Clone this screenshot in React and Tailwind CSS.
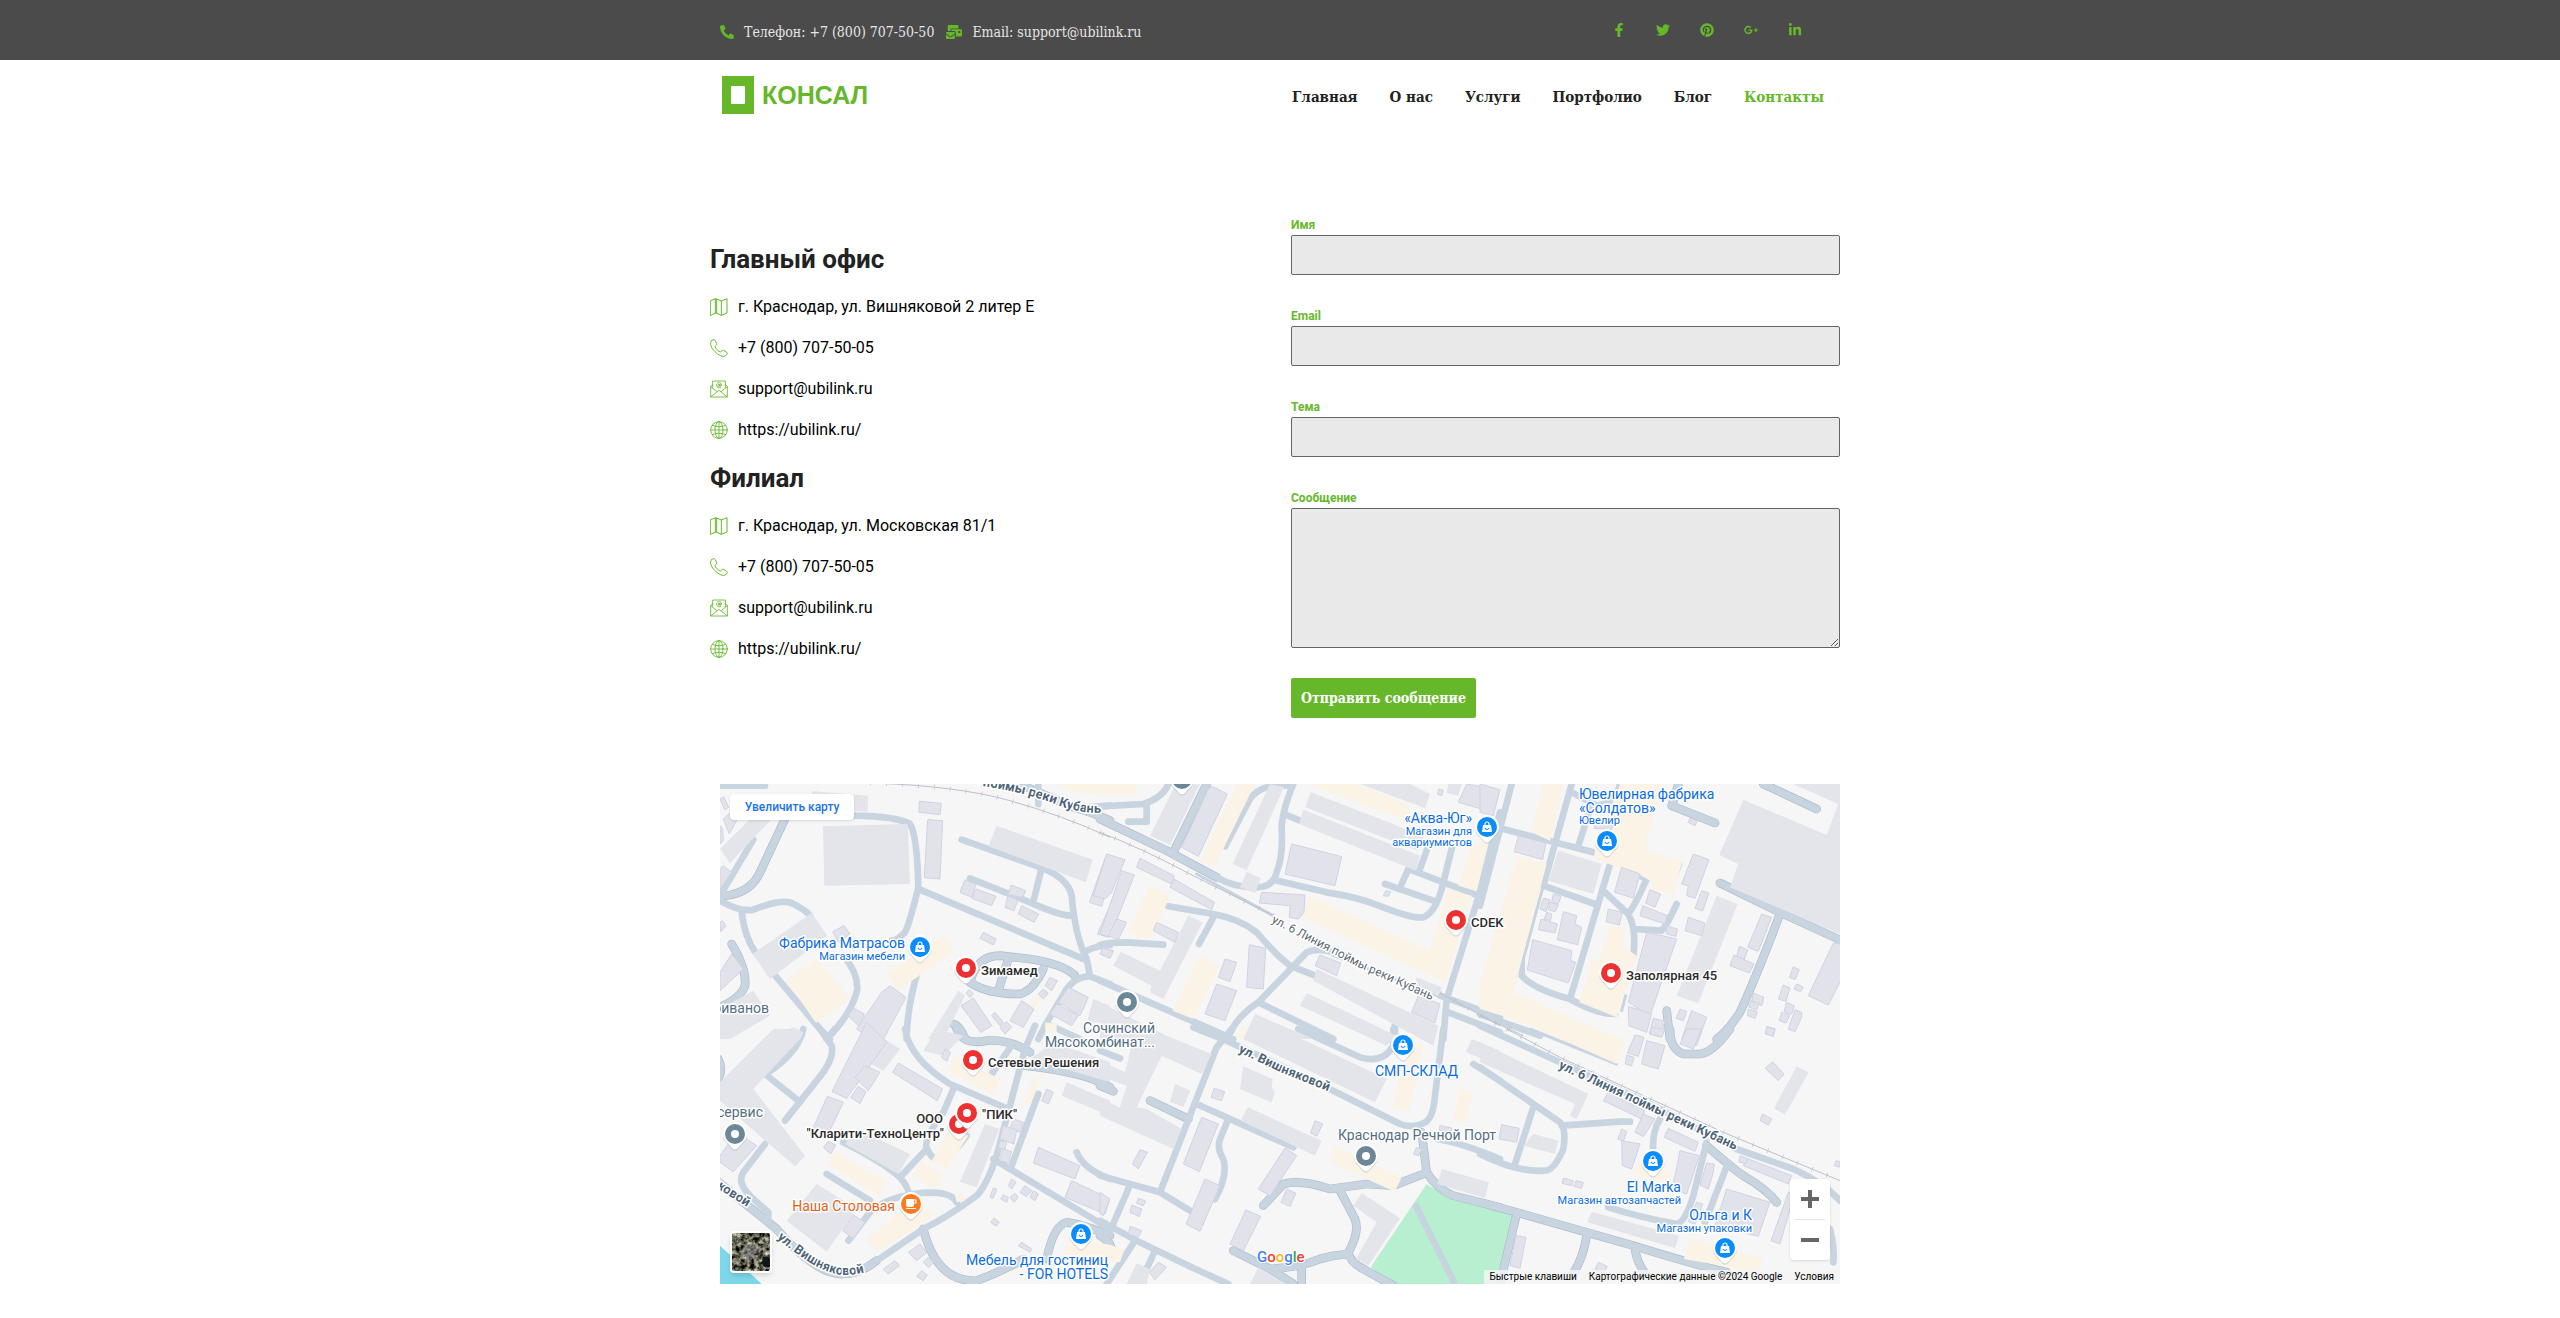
import { useState } from 'react';
import { FaPhoneAlt, FaMailBulk, FaFacebookF, FaTwitter, FaPinterest, FaGooglePlusG, FaLinkedinIn } from 'react-icons/fa';

const slab = "font-['Roboto_Slab','DejaVu_Serif_Condensed','DejaVu_Serif',serif]";

const socials = [
  { name: 'Facebook', Icon: FaFacebookF },
  { name: 'Twitter', Icon: FaTwitter },
  { name: 'Pinterest', Icon: FaPinterest },
  { name: 'Google+', Icon: FaGooglePlusG },
  { name: 'LinkedIn', Icon: FaLinkedinIn },
];

const menu = ['Главная', 'О нас', 'Услуги', 'Портфолио', 'Блог', 'Контакты'];

const offices = [
  { title: 'Главный офис', address: 'г. Краснодар, ул. Вишняковой 2 литер Е' },
  { title: 'Филиал', address: 'г. Краснодар, ул. Московская 81/1' },
];

/* ---------- Иконки контактов ---------- */

const lineIcon = {
  viewBox: '0 0 54 54',
  className: 'w-[18px] h-[18px] shrink-0 text-[#66b82a]',
  fill: 'none',
  stroke: 'currentColor',
  strokeWidth: 3,
  strokeLinejoin: 'round',
  strokeLinecap: 'round',
  'aria-hidden': true,
};

const MapIcon = () => (
  <svg {...lineIcon}>
    <path d="M2 8 L17 2 L34 9 L51 2 V45 L34 52 L17 45 L2 52 Z" />
    <path d="M16 3 V45 M20 4 V46 M34 9 V51" />
  </svg>
);

const PhoneIcon = () => (
  <svg {...lineIcon}>
    <path d="M5 5 C8 2 13 0 15 4 L20 13 C22 17 17 19 15 22 C16 29 25 37 31 39 C34 38 37 32 41 34 L50 40 C54 42 51 47 48 49 C44 53 37 53 32 50 C20 45 6 31 3 20 C1 14 1 9 5 5 Z" />
  </svg>
);

const MailIcon = () => (
  <svg {...lineIcon} strokeWidth={2.6}>
    <path d="M8 22 V3 H46 V22" />
    <path d="M8 14 L2 19 V51 H52 V19 L46 14" />
    <path d="M2 20 L20 34 M52 20 L34 34 M3 50 L27 31 L51 50" />
    <circle cx="27" cy="16" r="3" />
    <path d="M30 13 V18 C34 20 35 15 34 12 C31 6 22 7 20 13 C18 21 25 25 32 23" />
  </svg>
);

const GlobeIcon = () => (
  <svg {...lineIcon} strokeWidth={2.6}>
    <circle cx="27" cy="27" r="25" />
    <ellipse cx="27" cy="27" rx="12" ry="25" />
    <path d="M27 2 V52 M2 27 H52 M7 13 Q27 22 47 13 M7 41 Q27 32 47 41" />
  </svg>
);

/* ---------- Карта ---------- */

// Каждый квадрат: дороги (линии), outlined — дороги с обводкой,
// flat — крупные здания, small — здания с контуром, shops — торговые зоны
const tiles = [
  {
    id: 'nw', x: -30, y: -45,
    roads: 'M30 50 H165 M130 212 L30 380 M430 140 Q560 142 600 165 Q622 200 625 355 Q600 460 585 490 Q560 515 545 515 M30 395 Q90 430 130 422 Q210 390 245 402 Q290 425 300 440 M95 430 Q105 510 140 555 L200 625 L330 780 L360 810 M755 212 L1000 298 Q1075 330 1085 380 Q1095 500 1130 570 L1140 620 M780 328 L960 400 Q1050 440 1085 440 M993 305 L972 390 M630 362 L1125 572 M1130 545 Q1160 530 1200 528 M400 560 Q450 620 440 670 Q420 740 350 810 M625 600 Q590 720 590 810 M1200 645 L1140 622 Q1100 620 1070 660 L1005 770 L985 810 M1010 765 L1110 810 M985 45 V105 M1130 115 L1200 110',
    outlined: 'M225 150 L150 310 Q125 365 60 378 L30 382 M65 525 Q110 600 105 650 Q95 685 30 715 M780 640 Q800 560 870 560 L960 570 Q1060 585 1095 620 M780 640 Q830 675 930 675 Q970 665 1000 600 M895 570 L865 665 M730 765 Q750 770 765 810 M870 20 L1090 115 Q1150 130 1200 155',
    rail: 'M480 42 Q740 50 900 95 Q1060 140 1200 205',
    flat: ['339,172 593,165 600,345 343,350', '305,66 475,80 472,128 305,120', '30,240 130,140 185,150 60,282', '860,170 1148,272 1128,340 835,232', '128,555 305,432 352,500 180,630', '655,810 745,665 765,680 700,810', '30,720 130,665 180,740 60,810 30,810', '1150,690 1200,710 1200,760 1130,760', '170,810 250,775 280,790 270,810'],
    small: ['628,97 694,103 690,137 627,130', '653,152 698,155 690,330 643,326', '765,332 798,345 785,385 750,370', '798,360 858,382 845,410 785,388', '903,348 947,365 938,385 895,378', '893,382 924,392 912,426 885,415', '935,410 986,435 972,460 925,435', '1190,255 1215,265 1175,412 1138,400', '1200,410 1225,420 1195,505 1162,495', '1180,535 1210,545 1200,565 1172,555', '368,488 402,470 420,495 385,520', '30,610 65,555 100,600 30,665', '30,300 40,290 65,310 30,360', '30,90 42,84 56,115 44,122', '40,150 60,132 82,150 58,195', '30,170 38,180 40,215 30,225', '30,460 38,455 48,472 32,488', '810,508 820,490 858,510 850,528', '415,740 430,717 463,735 448,773', '515,670 540,650 588,685 510,830 440,780', '753,710 790,687 845,770 812,790', '900,755 935,695 972,720 940,775', '845,740 855,730 880,760 870,770', '870,775 890,758 905,775 885,795', '985,675 1000,660 1015,673 1000,690', '1005,650 1020,625 1042,635 1025,665', '1045,700 1075,655 1135,685 1110,740', '1020,735 1040,705 1105,740 1085,770', '768,672 778,662 790,674 780,686'],
    shops: ['528,615 700,500 732,548 562,665', '228,632 320,570 418,690 318,762', '958,705 990,680 1000,690 970,720', '1006,760 1040,765 1040,790 1006,790', '1035,45 1200,45 1200,78 1095,70'],
  },
  {
    id: 'n', x: 1140, y: -45,
    roads: 'M350 325 Q400 355 470 355 Q520 355 530 310 Q550 260 545 180 Q545 130 580 45 M0 112 L130 105 Q190 85 205 45 M140 110 V158 H85 M375 232 L450 90 Q480 45 560 50 M552 135 L600 155 M520 332 L680 370 Q780 385 850 415 Q940 450 970 445 Q1010 430 1030 340 L1060 220 M925 300 L1135 380 M855 345 L1000 395 M925 300 L903 350 M960 300 L985 230 M1200 130 L1135 385 L1040 690 L1030 810 M205 412 L340 435 Q420 450 470 490 Q530 560 570 590 L645 620 M340 445 L297 525 M190 527 L80 520 Q20 520 0 528 M700 550 Q650 535 620 550 L475 700 Q400 750 385 810 M475 700 L700 810 M0 635 L400 810 M885 755 V810 M1045 730 L1200 790 M1020 680 L1200 745',
    thin: 'M290 315 L520 440 M700 560 L1040 690',
    outlined: 'M0 150 L200 245 L350 325 M320 45 L220 250',
    rail: 'M0 190 Q130 240 270 315 L520 440 M1020 672 L1200 770',
    flat: ['150,200 225,50 300,45 210,228', '398,285 510,45 552,55 440,303', '420,355 440,308 482,328 465,372', '616,115 632,70 880,165 970,205 955,245', '597,165 610,122 960,260 948,305', '780,45 930,45 990,75 975,118', '1045,45 1085,45 1075,80 1040,72', '40,590 62,548 180,605 265,440 308,460 190,690 150,670 155,650', '640,635 650,600 1015,770 1000,830', '600,710 620,672 890,800 860,830', '430,810 465,735 640,810', '0,700 80,740 220,810 0,810', '950,625 1025,655 1018,680 945,660'],
    small: ['245,235 325,60 335,52 382,75 295,262', '575,225 725,263 705,350 555,315', '1100,45 1195,62 1180,130 1075,100', '485,370 615,378 612,430 595,450 568,445 570,410 478,402', '20,255 75,272 35,370 15,390 -20,380', '65,305 103,318 30,505 0,495', '120,268 222,320 215,345 110,295', '222,330 343,400 335,422 210,355', '170,460 235,490 225,520 160,485', '50,450 80,460 55,512 25,500', '8,535 40,548 30,568 0,555', '355,625 375,570 410,580 390,638', '315,735 350,645 410,665 375,755', '440,655 448,527 497,538 490,660', '645,590 660,558 722,582 710,620', '955,680 1020,705 1005,762 935,730', '850,380 858,365 872,368 865,382', '1012,75 1017,60 1030,64 1025,80'],
    shops: ['300,280 410,45 465,45 345,290', '0,45 107,45 107,78 0,75', '625,45 770,45 930,110 920,150 850,130', '630,382 990,545 1045,360 1115,380 1035,640 605,445', '1105,265 1120,220 1165,220 1130,367 1075,350', '150,348 212,378 150,513 85,490', '300,560 360,590 280,750 218,725', '1190,510 1200,510 1200,725 1135,715', '420,775 440,780 430,810 410,810'],
  },
  {
    id: 'ne', x: 2280, y: -45,
    roads: 'M95 45 L0 410 M70 180 L340 250 M275 45 L190 350 M295 230 L330 120 M275 70 L350 110 Q410 100 420 45 M190 350 L345 405 M390 285 L270 690 M375 370 L445 435 Q470 400 500 330 L480 320 M445 435 Q470 480 460 560 M465 480 L545 485 Q560 470 590 405 M125 560 V620 Q160 660 270 690 Q350 735 405 735 M0 735 L180 800',
    thin: 'M603 285 L590 320 M190 350 L122 600 M437 680 L425 725',
    outlined: 'M595 45 L575 110 L705 162 M850 45 L1010 120 M720 342 L900 430 L1085 515 M900 435 Q830 620 780 730 Q740 790 710 810 M560 725 L570 810',
    rail: 'M0 740 L130 800',
    flat: ['235,245 365,285 340,375 205,335', '790,92 1040,198 1075,105 940,45 1080,45 1080,495 750,355 775,285 718,258', '710,380 773,405 655,703 590,680'],
    small: ['0,45 60,62 40,140 0,130', '115,200 198,222 188,272 103,248', '425,295 480,315 460,387 403,370', '510,362 542,375 525,415 497,402', '488,410 562,440 555,465 480,440', '385,420 427,430 418,468 378,458', '640,255 687,272 645,388 620,380 625,350 605,345', '665,365 687,372 668,426 645,418', '625,445 675,462 665,500 615,485', '560,470 592,480 588,502 560,495', '845,435 875,445 835,547 803,535', '778,532 803,543 793,570 770,562', '762,558 822,585 808,612 750,590', '1060,522 1085,525 1085,630 1045,708 985,680', '940,593 958,602 945,632 928,625', '910,648 930,657 918,697 895,690', '950,645 970,655 962,668 942,660', '820,672 852,685 845,710 815,700', '813,695 838,703 830,722 806,714', '805,720 832,728 825,748 802,740', '920,700 943,710 935,735 912,728', '905,730 930,738 918,762 898,755', '945,722 965,730 965,745 945,788 925,780', '862,772 886,780 880,802 856,795', '190,388 210,392 198,428 180,420', '220,375 243,382 235,405 215,400', '210,400 235,408 225,428 205,422', '200,430 215,435 212,455 193,450', '183,450 232,465 225,492 175,482', '250,428 290,440 285,465 305,475 293,527 232,512', '158,512 275,545 272,575 287,580 265,642 142,603', '500,490 590,510 510,740 445,700', '445,712 515,735 500,790 447,770', '520,748 555,757 540,803 508,795', '600,720 620,728 610,755 588,748', '635,725 680,745 650,830 605,810', '630,148 652,155 645,170 624,160', '345,165 398,170 395,182 343,178'],
    shops: ['190,45 250,45 210,215 155,190', '110,262 200,285 100,670 435,815 410,885 130,760 0,720 0,640', '345,240 420,45 545,45 495,245 607,278 577,378 515,360 520,340 480,318 430,300 342,270', '390,465 438,485 425,530 470,560 410,745 298,700 335,570 360,570'],
  },
  {
    id: 'sw', x: -30, y: 735,
    roads: 'M280 0 Q265 70 175 130 M165 135 L265 215 M330 0 L365 50 Q375 90 320 155 L225 275 M375 0 L350 30 M585 0 Q600 90 720 165 L895 240 M730 180 L700 250 Q640 330 650 360 L570 445 M650 355 Q660 385 680 390 Q730 380 770 320 M975 -10 L945 60 Q905 210 860 380 Q830 470 800 500 Q720 560 640 600 L500 695 M985 195 L905 410 M850 390 L1200 600 M1100 370 Q1120 420 1200 450 M400 340 Q520 400 570 445 Q600 480 595 500 M350 435 L480 515 M415 635 L480 550 Q520 510 610 495 Q720 480 740 520 M165 345 L100 430 Q80 460 120 500 L175 550 V580 M905 50 Q870 100 845 135',
    outlined: 'M20 455 L200 600 Q320 740 400 735 Q450 735 500 695 M640 600 Q680 760 800 755 Q870 730 940 690 M1010 690 Q1030 590 1070 580 Q1120 585 1200 620 M740 0 Q760 50 830 35 Q900 30 960 70 M945 110 Q1130 130 1200 175 M25 90 Q40 120 25 150',
    flat: ['30,160 190,0 250,0 275,25 130,180 285,380 255,412 80,260 30,215', '520,28 570,60 520,125 475,100', '440,300 600,375 565,435 405,345', '230,575 320,465 440,540 350,668', '640,65 680,0 760,20 700,80', '750,458 825,285 868,300 800,475', '1070,160 1200,215 1200,260 1055,200', '1030,40 1200,100 1200,160 960,90'],
    small: ['366,188 470,-20 530,40 410,208', '435,145 465,110 510,130 475,185', '422,205 445,172 468,188 450,224', '310,295 352,202 400,220 350,325', '548,130 565,102 698,180 682,215', '340,355 355,337 377,348 362,375', '30,380 80,310 140,350 70,428 30,400', '398,605 430,558 465,580 430,628', '695,85 705,60 722,70 710,97', '910,270 940,280 930,310 900,300', '880,290 920,303 912,345 870,330', '870,335 890,340 885,360 865,355', '880,360 905,368 895,402 868,395', '995,215 1010,180 1030,190 1015,225', '985,355 1110,410 1095,450 970,402', '1085,455 1200,510 1185,555 1065,505', '895,470 905,450 918,460 905,480', '930,490 945,470 965,485 950,503', '960,505 970,485 985,495 975,515', '840,505 850,476 860,480 850,508', '872,510 880,497 895,505 890,520', '900,505 915,493 925,505 912,520', '842,580 852,567 868,580 858,592', '595,670 630,645 650,670 620,695', '640,700 655,685 672,700 655,715', '520,720 555,695 568,710 535,735', '620,742 635,725 652,738 640,755', '925,650 935,640 965,660 960,670'],
    shops: ['355,405 375,368 528,458 505,500', '470,630 620,510 670,560 500,668', '605,440 630,398 697,435 675,480', '665,395 720,300 775,320 710,420', '735,500 760,490 765,515 740,520', '712,125 735,80 870,150 850,198', '943,218 970,145 990,152 960,230', '1060,675 1080,620 1210,650 1242,665 1230,700'],
  },
  {
    id: 's', x: 1140, y: 735,
    roads: 'M280 -5 L380 35 L700 185 L900 285 Q940 300 975 280 Q1000 265 1005 200 L1030 0 M395 0 L350 55 L180 490 M290 225 L580 355 M0 440 L180 490 L270 545 M85 480 L20 630 M0 575 L110 635 L275 715 L385 765 M105 635 L20 765 M165 665 L140 720 M385 270 L360 330 Q350 360 370 390 Q385 440 345 510 M595 0 L780 85 Q850 105 880 50 V0 M1010 330 Q1080 340 1200 390 M1120 105 L1200 155 M0 65 L60 88',
    outlined: 'M150 215 L265 270 M490 530 L550 465 Q600 450 690 480 L800 465 L880 470 L970 435 M965 310 L980 430 Q1010 480 1060 500 L1200 535 M720 485 L765 570 Q780 610 745 670 Q750 700 790 720 L880 770 M400 665 L510 720 L580 765 M510 720 Q600 715 660 690 Q700 678 745 675 M605 710 V765 M0 170 L40 187 M0 620 Q40 640 35 680',
    flat: ['100,30 150,0 335,75 305,135 185,80 110,235 140,240 245,300 220,360 0,260 0,210 60,235 80,170 0,140 0,95 75,130', '430,30 450,-10 520,-10 860,150 825,220', '430,112 518,150 515,175 525,190 515,220 420,180', '225,165 272,185 250,235 210,218', '422,275 443,235 665,335 645,380', '785,492 900,568 805,710 768,690 830,580 760,530', '1025,420 1167,460 1155,507 1012,465', '80,765 110,703 150,720 140,765', '450,765 475,715 560,765', '1115,30 1200,65 1200,110 1098,70'],
    small: ['333,205 343,178 374,188 365,215', '305,265 355,285 298,428 250,405', '315,450 360,470 300,607 258,585', '97,405 120,362 142,370 115,420', '645,275 668,285 650,322 632,312', '555,357 590,380 510,500 475,480', '560,480 588,493 570,532 543,520', '438,543 482,562 430,665 390,645', '115,508 137,516 130,530 110,523', '95,528 125,540 118,563 90,550', '90,592 125,605 115,625 85,615', '148,730 175,700 200,715 165,752', '0,490 30,510 10,560 0,555', '940,375 950,355 965,362 955,380', '1020,290 1055,297 1052,310 1018,303'],
    shops: ['705,355 905,445 885,488 690,400', '930,40 972,45 925,248 875,235', '1080,180 1120,190 1100,280 1058,270', '425,-10 440,0 430,25 415,20'],
  },
  {
    id: 'se', x: 2280, y: 735,
    roads: 'M0 -10 L240 100 L540 240 L770 360 L940 420 Q1030 460 1080 515 M0 115 L240 280 Q260 300 250 360 Q220 430 190 425 Q110 430 0 375 M245 290 L420 278 H450 M160 235 L105 405 M540 270 Q515 310 520 370 M680 340 L640 500 Q615 580 590 585 Q480 565 385 535 M745 400 L675 580 M1050 600 Q1065 660 1060 700',
    thin: 'M150 0 L410 105',
    outlined: 'M570 0 Q570 60 610 75 H660 Q700 70 750 0 M680 350 Q760 420 790 440 Q860 480 890 520 M0 520 L110 550 L320 610 L460 650 Q620 700 740 730 M320 620 Q310 690 275 740 M465 660 Q470 700 500 740 M110 555 L60 765',
    rail: 'M80 0 L240 85 L730 310 L1080 455',
    flat: ['0,40 325,195 290,270 270,260 285,225 0,100', '950,112 986,130 915,257 882,238', '160,315 235,335 225,375 130,350', '335,548 597,620 585,657 322,580', '0,455 25,462 15,505 0,500'],
    small: ['465,18 492,25 475,82 442,72', '440,78 462,85 455,110 436,105', '500,35 555,50 535,120 485,105', '515,-5 555,0 545,25 510,15', '620,0 665,0 640,60 600,45', '860,-5 885,0 878,22 856,12', '878,98 912,135 895,155 856,118', '848,255 875,270 865,288 840,275', '385,190 495,245 485,270 370,215', '490,255 525,270 490,323 465,310', '565,298 655,340 645,367 553,325', '65,287 118,298 110,340 57,330', '425,300 440,308 430,337 413,330', '425,335 480,345 455,420 427,410', '600,365 658,380 620,495 575,480 585,440', '680,402 703,405 700,430 685,480 660,468', '740,480 870,520 835,622 705,590', '800,388 935,440 925,465 790,410', '780,380 803,388 798,403 777,400', '945,490 900,645 873,635 925,490', '108,620 138,625 120,718 90,710', '355,700 382,712 370,735 345,722', '250,447 280,455 276,470 246,463', '288,455 310,460 305,478 282,472', '1068,395 1080,398 1080,415 1063,410', '650,520 668,525 645,585 625,578'],
    shops: ['470,400 575,430 560,465 460,430', '630,628 850,690 835,730 612,690'],
  },
];

const pins = [
  { x: 462, y: -5, kind: 'place' },
  { x: 200, y: 163, kind: 'shop' },
  { x: 246, y: 184, kind: 'mark' },
  { x: 767, y: 43, kind: 'shop' },
  { x: 736, y: 136, kind: 'mark' },
  { x: 407, y: 218, kind: 'place' },
  { x: 683, y: 261, kind: 'shop' },
  { x: 887, y: 57, kind: 'shop' },
  { x: 891, y: 189, kind: 'mark' },
  { x: 253, y: 276, kind: 'mark' },
  { x: 239, y: 340, kind: 'mark' },
  { x: 247, y: 329, kind: 'mark' },
  { x: 15, y: 350, kind: 'place' },
  { x: 191, y: 420, kind: 'food' },
  { x: 361, y: 450, kind: 'shop' },
  { x: 646, y: 372, kind: 'place' },
  { x: 933, y: 377, kind: 'shop' },
  { x: 1005, y: 464, kind: 'shop' },
];

const pinColors = { shop: '#0a8cff', mark: '#ee3030', place: '#6c8795', food: '#ff7a1f' };

const labels = [
  { t: 'Фабрика Матрасов', x: 185, y: 164, c: 'shop', end: true },
  { t: 'Магазин мебели', x: 185, y: 176, c: 'sub', end: true },
  { t: 'Зимамед', x: 261, y: 191, c: 'mark' },
  { t: '«Аква-Юг»', x: 752, y: 39, c: 'shop', end: true },
  { t: 'Магазин для', x: 752, y: 51, c: 'sub', end: true },
  { t: 'аквариумистов', x: 752, y: 62, c: 'sub', end: true },
  { t: 'CDEK', x: 751, y: 143, c: 'mark' },
  { t: 'Ювелирная фабрика', x: 859, y: 15, c: 'shop' },
  { t: '«Солдатов»', x: 859, y: 29, c: 'shop' },
  { t: 'Ювелир', x: 859, y: 40, c: 'sub' },
  { t: 'Заполярная 45', x: 906, y: 196, c: 'mark' },
  { t: 'Эриванов', x: 49, y: 229, c: 'place', end: true },
  { t: 'Сетевые Решения', x: 268, y: 283, c: 'mark' },
  { t: 'ООО', x: 223, y: 339, c: 'mark', end: true },
  { t: '"Кларити-ТехноЦентр"', x: 224, y: 354, c: 'mark', end: true },
  { t: '"ПИК"', x: 262, y: 335, c: 'mark' },
  { t: 'сервис', x: 43, y: 333, c: 'place', end: true },
  { t: 'Наша Столовая', x: 175, y: 427, c: 'food', end: true },
  { t: 'Мебель для гостиниц', x: 388, y: 481, c: 'shop', end: true },
  { t: '- FOR HOTELS', x: 388, y: 495, c: 'shop', end: true },
  { t: 'Сочинский', x: 435, y: 249, c: 'place', end: true },
  { t: 'Мясокомбинат...', x: 435, y: 263, c: 'place', end: true },
  { t: 'СМП-СКЛАД', x: 655, y: 292, c: 'shop' },
  { t: 'Краснодар Речной Порт', x: 618, y: 356, c: 'place' },
  { t: 'El Marka', x: 961, y: 408, c: 'shop', end: true },
  { t: 'Магазин автозапчастей', x: 961, y: 420, c: 'sub', end: true },
  { t: 'Ольга и К', x: 1032, y: 436, c: 'shop', end: true },
  { t: 'Магазин упаковки', x: 1032, y: 448, c: 'sub', end: true },
];

const labelStyles = {
  shop: 'text-[14px] fill-[#0b6be3]',
  sub: 'text-[11px] fill-[#0b6be3]',
  mark: 'text-[13px] font-medium fill-[#2b2b2b]',
  place: 'text-[14px] fill-[#546e7f]',
  food: 'text-[14px] fill-[#e2621b]',
};

const streets = [
  { id: 'st1', d: 'M190 -40 L262 2 Q305 8 340 22 Q360 29 381 29', t: 'ул. 6 Линия поймы реки Кубань', end: true, bold: true },
  { id: 'st2', d: 'M551 138 L640 184 L720 220', t: 'ул. 6 Линия поймы реки Кубань' },
  { id: 'st3', d: 'M838 284 L920 322 L1030 373', t: 'ул. 6 Линия поймы реки Кубань', bold: true },
  { id: 'st4', d: 'M518 268 L560 288 L630 316', t: 'ул. Вишняковой', bold: true },
  { id: 'st5', d: 'M57 454 Q100 491 125 491 Q140 491 160 484', t: 'ул. Вишняковой', bold: true },
  { id: 'st6', d: 'M-60 360 L0 406 L27 423', t: 'ул. Вишняковой', end: true, bold: true },
];

const Pin = ({ x, y, kind }) => (
  <g transform={`translate(${x} ${y})`}>
    <path d="M-12 0 A12 12 0 1 1 12 0 C12 6 8 8 3 14 Q0 17 -3 14 C-8 8 -12 6 -12 0 Z" fill="#9aa3ad" opacity="0.5" transform="translate(0 1)" />
    <path d="M-12 0 A12 12 0 1 1 12 0 C12 6 8 8 3 14 Q0 17 -3 14 C-8 8 -12 6 -12 0 Z" fill="#fff" />
    <circle r="10" fill={pinColors[kind]} />
    {kind === 'shop' && (
      <>
        <path d="M-4 -2 H4 L5 5 H-5 Z" fill="#fff" />
        <path d="M-2 -1 V-3 A2 2 0 0 1 2 -3 V-1" fill="none" stroke="#fff" strokeWidth="1.2" />
        <path d="M-2 1 Q0 4 2 1" fill="none" stroke="#0a8cff" strokeWidth="1.2" />
      </>
    )}
    {kind === 'food' && (
      <>
        <path d="M-5 -5 H3 V1 Q3 3 1 3 H-3 Q-5 3 -5 1 Z M-5 4 H5 V5 H-5 Z" fill="#fff" />
        <path d="M3 -4 H5 V-1 H3" fill="none" stroke="#fff" strokeWidth="1.2" />
      </>
    )}
    {(kind === 'mark' || kind === 'place') && <circle r="4" fill="#fff" />}
  </g>
);

const MapDrawing = () => (
  <svg
    viewBox="0 0 1120 500"
    preserveAspectRatio="xMidYMid slice"
    className="w-full h-full bg-[#f6f6f6]"
    role="img"
    aria-label="Карта"
  >
    <g transform="scale(0.33333)" strokeLinejoin="round">
      <g fill="#b8efd1">
        <path d="M2120 1200 Q2170 1240 2340 1275 L2385 1285 L2325 1500 H2020 L1952 1450 Z" />
      </g>
      <path d="M0 1385 L125 1500 H0 Z" fill="#7dd7ea" />
      {tiles.map((tile) => (
        <g key={tile.id} transform={`translate(${tile.x} ${tile.y})`} fill="none" strokeLinecap="round">
          <path d={tile.outlined} stroke="#adbccb" strokeWidth="26" />
        </g>
      ))}
      {tiles.map((tile) => (
        <g key={tile.id} transform={`translate(${tile.x} ${tile.y})`} fill="none" stroke="#c8d5e1" strokeLinecap="round">
          <path d={tile.outlined} strokeWidth="22" />
          <path d={tile.roads} strokeWidth="20" />
          {tile.thin && <path d={tile.thin} strokeWidth="9" />}
        </g>
      ))}
      <path d="M2085 1260 L2205 1500" stroke="#c6d4df" strokeWidth="20" fill="none" />
      {tiles.map((tile) => (
        <g key={tile.id} transform={`translate(${tile.x} ${tile.y})`}>
          {tile.shops.map((p) => <polygon key={p} points={p} fill="#faf3e6" />)}
          {tile.flat.map((p) => <polygon key={p} points={p} fill="#e4e5ea" />)}
          {tile.small.map((p) => <polygon key={p} points={p} fill="#e2e3ea" stroke="#d0d2e4" strokeWidth="3" />)}
          {tile.rail && (
            <g fill="none" stroke="#bcc0c9">
              <path d={tile.rail} strokeWidth="3" />
              <path d={tile.rail} strokeWidth="15" strokeDasharray="2 46" />
            </g>
          )}
        </g>
      ))}
    </g>

    <g className="font-['Roboto',sans-serif]" stroke="#fff" strokeWidth="3" strokeLinejoin="round" paintOrder="stroke">
      {streets.map((s) => (
        <g key={s.id}>
          <path id={s.id} d={s.d} fill="none" stroke="none" />
          <text className={s.bold ? 'text-[13px] font-bold fill-[#4c6377]' : 'text-[12px] fill-[#5c6770]'}>
            <textPath href={`#${s.id}`} startOffset={s.end ? '100%' : '0%'} textAnchor={s.end ? 'end' : 'start'}>
              {s.t}
            </textPath>
          </text>
        </g>
      ))}
      {labels.map((l) => (
        <text key={l.t + l.y} x={l.x} y={l.y} textAnchor={l.end ? 'end' : 'start'} className={labelStyles[l.c]}>
          {l.t}
        </text>
      ))}
    </g>

    {pins.map((p) => <Pin key={`${p.x}-${p.y}`} {...p} />)}

    <text x="537" y="478" className="font-['Roboto',sans-serif] text-[15px] font-medium" stroke="#fff" strokeWidth="2" paintOrder="stroke">
      <tspan fill="#4285f4">G</tspan>
      <tspan fill="#ea4335">o</tspan>
      <tspan fill="#fbbc05">o</tspan>
      <tspan fill="#4285f4">g</tspan>
      <tspan fill="#34a853">l</tspan>
      <tspan fill="#ea4335">e</tspan>
    </text>
  </svg>
);

const SatelliteThumb = () => (
  <svg viewBox="0 0 38 38" className="w-full h-full" aria-hidden="true">
    <filter id="ground" x="0" y="0" width="100%" height="100%" colorInterpolationFilters="sRGB">
      <feTurbulence type="fractalNoise" baseFrequency="0.22" numOctaves="4" seed="8" />
      <feColorMatrix values="1.6 0 0 0 -0.42  1.5 0.1 0 0 -0.42  1.3 0 0.1 0 -0.38  0 0 0 0 1" />
    </filter>
    <rect width="38" height="38" filter="url(#ground)" />
    <path d="M14 10 L26 15 L20 27 L10 22 Z" fill="#8a8c93" opacity="0.5" />
    <path d="M31 24 Q38 23 38 27 V34 Q31 36 30 30 Z" fill="#10151a" />
    <path d="M0 30 L38 8 M4 0 L30 38" stroke="#a9a9a5" strokeWidth="1" opacity="0.5" />
  </svg>
);

/* ---------- Страница ---------- */

const fieldClass = 'block w-full bg-[#e9e9e9] border border-[#666660] rounded-xs px-3 text-sm';

const Field = ({ id, label, type = 'text', value, onChange }) => (
  <div>
    <label htmlFor={id} className="block text-[12px] leading-4 font-bold text-[#66b82a] mb-0.5">{label}</label>
    <input id={id} name={id} type={type} value={value} onChange={onChange} className={`${fieldClass} h-10`} />
  </div>
);

const App = () => {
  const [form, setForm] = useState({ name: '', email: '', subject: '', message: '' });

  const handleChange = (e) => {
    const { name, value } = e.target;
    setForm({ ...form, [name]: value });
  };

  return (
    <div className="bg-white font-['Roboto',sans-serif] text-black">
      {/* Верхняя полоса */}
      <div className="bg-[#4b4b4b]">
        <div className="max-w-[1120px] mx-auto h-[60px] flex items-center justify-between">
          <div className={`flex items-center gap-3 pt-1 text-[14px] font-light text-[#e6e6e6] ${slab}`}>
            <a href="tel:+78007075050" className="flex items-center gap-2.5">
              <FaPhoneAlt className="w-3.5 h-3.5 text-[#66b82a]" />
              Телефон: +7 (800) 707-50-50
            </a>
            <a href="mailto:support@ubilink.ru" className="flex items-center gap-2.5">
              <FaMailBulk className="w-4 h-4 text-[#66b82a]" />
              Email: support@ubilink.ru
            </a>
          </div>
          <div className="flex gap-[30px] pr-[38px]">
            {socials.map(({ name, Icon }) => (
              <a key={name} href="#" aria-label={name} className="w-3.5 flex justify-center text-[#66b82a]">
                <Icon className="h-3.5 w-auto shrink-0" />
              </a>
            ))}
          </div>
        </div>
      </div>

      {/* Шапка с логотипом и меню */}
      <header className="max-w-[1120px] mx-auto h-[70px] flex items-center justify-between">
        <a href="#" className="flex items-center gap-2 pl-0.5 text-[#66b82a]">
          <svg viewBox="0 0 32 38" className="w-8 h-[38px]" aria-hidden="true">
            <path fillRule="evenodd" fill="currentColor" d="M0 0 H32 V38 H0 Z M10 10 Q9 10 9 11 V27 Q9 28 10 28 H22 Q23 28 23 27 V11 Q23 10 22 10 Z" />
          </svg>
          <span className="font-['Liberation_Sans',Arial,sans-serif] text-[25px] leading-8 font-bold">КОНСАЛ</span>
        </a>
        <nav className="pr-4 pt-1">
          <ul className={`flex gap-8 text-[15px] font-bold ${slab}`}>
            {menu.map((item) => (
              <li key={item}>
                <a href="#" className={item === 'Контакты' ? 'text-[#66b82a]' : 'text-[#222]'}>{item}</a>
              </li>
            ))}
          </ul>
        </nav>
      </header>

      {/* Контакты и форма */}
      <main>
        <section className="max-w-[1140px] mx-auto pt-[87px] pr-[10px] flex">
          <div className="w-[581px] pt-[26px]">
            {offices.map((office) => (
              <div key={office.title} className="h-[219px]">
                <h2 className="text-[26px] leading-8 font-bold text-[#222]">{office.title}</h2>
                <ul className="pt-5 text-[16px] leading-6">
                  <li className="flex items-center gap-2.5 mb-[17px]"><MapIcon />{office.address}</li>
                  <li className="flex items-center gap-2.5 mb-[17px]"><PhoneIcon /><a href="tel:+78007075005">+7 (800) 707-50-05</a></li>
                  <li className="flex items-center gap-2.5 mb-[17px]"><MailIcon /><a href="mailto:support@ubilink.ru">support@ubilink.ru</a></li>
                  <li className="flex items-center gap-2.5"><GlobeIcon /><a href="https://ubilink.ru/">https://ubilink.ru/</a></li>
                </ul>
              </div>
            ))}
          </div>

          <form className="flex-1 flex flex-col gap-[33px]" onSubmit={(e) => e.preventDefault()}>
            <Field id="name" label="Имя" value={form.name} onChange={handleChange} />
            <Field id="email" label="Email" type="email" value={form.email} onChange={handleChange} />
            <Field id="subject" label="Тема" value={form.subject} onChange={handleChange} />
            <div>
              <label htmlFor="message" className="block text-[12px] leading-4 font-bold text-[#66b82a] mb-0.5">Сообщение</label>
              <textarea id="message" name="message" value={form.message} onChange={handleChange} className={`${fieldClass} h-[140px]`} />
              <button type="submit" className={`mt-[30px] h-10 px-2.5 rounded-xs bg-[#66b82a] text-white text-[14px] font-bold ${slab}`}>
                Отправить сообщение
              </button>
            </div>
          </form>
        </section>

        {/* Карта */}
        <section className="max-w-[1120px] mx-auto mt-[66px] mb-8 h-[500px] relative overflow-hidden">
          <MapDrawing />
          <a href="#" className="absolute left-2.5 top-2.5 h-[26px] w-[124px] flex items-center justify-center bg-white rounded-sm shadow text-[12px] font-medium text-[#1a73e8]">
            Увеличить карту
          </a>
          <button type="button" aria-label="Спутник" className="absolute left-2.5 bottom-[11px] w-[42px] h-[42px] border-2 border-white rounded-sm shadow-md overflow-hidden">
            <SatelliteThumb />
          </button>
          <div className="absolute right-2.5 bottom-6 w-10 bg-white rounded-sm shadow text-[#666] flex flex-col items-center">
            <button type="button" aria-label="Приблизить" className="w-10 h-10 flex items-center justify-center">
              <svg viewBox="0 0 18 18" className="w-[18px] h-[18px]"><path d="M7 0 H11 V7 H18 V11 H11 V18 H7 V11 H0 V7 H7 Z" fill="currentColor" /></svg>
            </button>
            <div className="w-[30px] h-px bg-[#e6e6e6]" />
            <button type="button" aria-label="Отдалить" className="w-10 h-10 flex items-center justify-center">
              <svg viewBox="0 0 18 18" className="w-[18px] h-[18px]"><path d="M0 7 H18 V11 H0 Z" fill="currentColor" /></svg>
            </button>
          </div>
          <div className="absolute right-0 bottom-0 h-3.5 flex items-center gap-3 px-1.5 bg-[#f5f5f5]/80 text-[10px] leading-none text-black">
            <button type="button">Быстрые клавиши</button>
            <span>Картографические данные ©2024 Google</span>
            <a href="#">Условия</a>
          </div>
        </section>
      </main>
    </div>
  );
};

export default App;
